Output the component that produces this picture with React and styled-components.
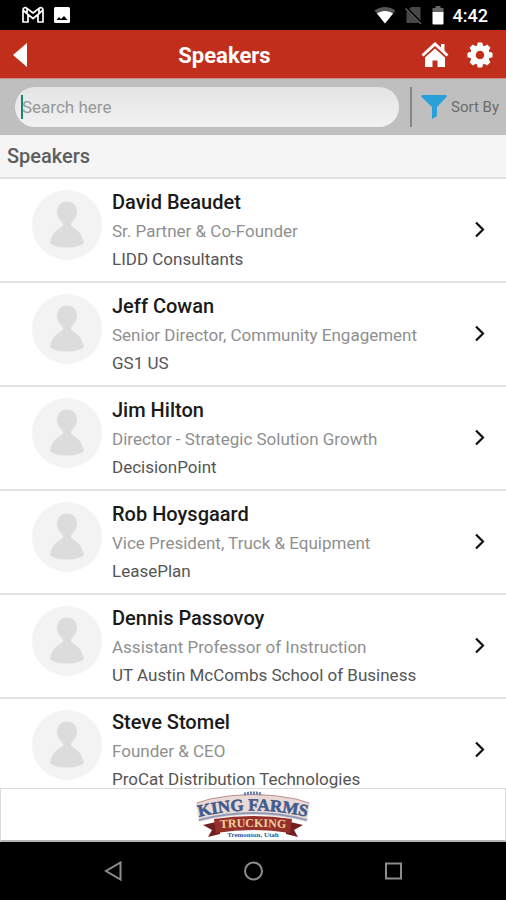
import React, { useState } from 'react';
import styled, { ThemeProvider, createGlobalStyle } from 'styled-components';

const theme = {
  primary: '#c12e1b',
  bar: '#bfbfbf',
  line: '#e1e1e1',
  accent: '#2a9fd8',
};

const speakers = [
  { name: 'David Beaudet', role: 'Sr. Partner & Co-Founder', company: 'LIDD Consultants' },
  { name: 'Jeff Cowan', role: 'Senior Director, Community Engagement', company: 'GS1 US' },
  { name: 'Jim Hilton', role: 'Director - Strategic Solution Growth', company: 'DecisionPoint' },
  { name: 'Rob Hoysgaard', role: 'Vice President, Truck & Equipment', company: 'LeasePlan' },
  { name: 'Dennis Passovoy', role: 'Assistant Professor of Instruction', company: 'UT Austin McCombs School of Business' },
  { name: 'Steve Stomel', role: 'Founder & CEO', company: 'ProCat Distribution Technologies' },
];

const StatusBar = () => (
  <StatusContainer>
    <StatusGroup>
      <svg width="22" height="18" viewBox="0 0 22 18" fill="none" stroke="#fff" aria-hidden="true">
        <path
          d="M1 16V4C1 1.5 3.5 1 5 2.300L11 7L17 2.300C18.500 1 21 1.500 21 4V16H16V8.500L11 12.500L6 8.500V16ZM1 4L6 8.500M21 4L16 8.500M5 2.300V7.500M17 2.300V7.500"
          strokeWidth="1.7"
          strokeLinejoin="round"
        />
      </svg>
      <svg width="18" height="18" viewBox="0 0 18 18" aria-hidden="true">
        <rect x="1" y="1" width="16" height="16" rx="1.500" fill="#fff" />
        <path d="M3.500 14L6 11L8 13L11 10L14.500 14Z" fill="#000" />
      </svg>
    </StatusGroup>
    <StatusGroup>
      <svg width="22" height="18" viewBox="0 0 22 18" aria-hidden="true">
        <path d="M0.500 4.500C6.500 -0.300 15.500 -0.300 21.500 4.500L11 17.500Z" fill="#555" />
        <path d="M3 7.500C7.500 4 14.500 4 19 7.500L11 17.500Z" fill="#fff" />
      </svg>
      <svg width="18" height="18" viewBox="0 0 18 18" aria-hidden="true">
        <path d="M6 1H15.500V17H1.500V6Z" fill="#484848" />
        <path d="M0 1L17 18" stroke="#000" strokeWidth="3" />
        <path d="M0.500 2.500L16 18" stroke="#666" strokeWidth="1.300" />
      </svg>
      <svg width="12" height="19" viewBox="0 0 12 19" aria-hidden="true">
        <path d="M3.500 0H8.500V2H11.500V7H0.500V2H3.500Z" fill="#666" />
        <path d="M0.500 6H11.500V17.500Q11.500 18.500 10.500 18.500H1.500Q0.500 18.500 0.500 17.500Z" fill="#fff" />
      </svg>
      <Clock>4:42</Clock>
    </StatusGroup>
  </StatusContainer>
);

const Avatar = () => (
  <AvatarSvg viewBox="0 0 70 70" aria-hidden="true">
    <circle cx="35" cy="35" r="35" fill="#f3f3f3" />
    <path
      d="M35 11.500C41 11.500 45 16 45 21.500C45 26 43 29 40 32C38.500 34 38.500 35.500 40.500 37C46.500 40 50.500 45.500 52 53C46 59 24 59 18 53C19.500 45.500 23.500 40 29.500 37C31.500 35.500 31.500 34 30 32C27 29 25 26 25 21.500C25 16 29 11.500 35 11.500Z"
      fill="#dcdcdc"
    />
  </AvatarSvg>
);

const SponsorLogo = () => (
  <svg width="118" height="48" viewBox="0 0 118 48" role="img" aria-label="King Farms Trucking">
    <defs>
      <path id="nameArc" d="M1 27Q59 12 117 27" />
      <path id="ribbonArc" d="M10 38Q59 34 108 38" />
    </defs>
    <path d="M2 12L16 8Q59 -1 102 8L116 12L113 31Q59 17 5 31Z" fill="#ead9d6" />
    <path d="M3 12L16 8Q59 -1 102 8L115 12" fill="none" stroke="#b98f90" strokeWidth="1" />
    <path d="M5 29Q59 15 113 29" fill="none" stroke="#8f9dbb" strokeWidth="2" />
    <path d="M50 3Q59 1 68 3" fill="none" stroke="#617fae" strokeWidth="3" strokeDasharray="2 1" />
    <path d="M9 34L26 30V43L14 46L18 39ZM109 34L92 30V43L104 46L100 39Z" fill="#742022" />
    <path d="M20 28Q59 22 98 28L96 42Q59 36 22 42Z" fill="#96302a" />
    <text
      fontFamily="'Liberation Serif', serif"
      fontWeight="700"
      fontSize="17"
      fill="#3b6298"
      stroke="#3b4f79"
      strokeWidth="0.500"
      textAnchor="middle"
    >
      <textPath href="#nameArc" startOffset="50%">KING FARMS</textPath>
    </text>
    <text
      fontFamily="'Liberation Serif', serif"
      fontWeight="700"
      fontSize="12"
      fill="#f2d3a0"
      textAnchor="middle"
    >
      <textPath href="#ribbonArc" startOffset="50%">TRUCKING</textPath>
    </text>
    <text
      x="59"
      y="46"
      fontFamily="'Liberation Serif', serif"
      fontWeight="700"
      fontSize="7"
      fill="#35598d"
      textAnchor="middle"
    >
      Tremonton, Utah
    </text>
  </svg>
);

const SpeakersPage = () => {
  const [search, setSearch] = useState('');

  return (
    <Container>
      <StatusBar />
      <Header>
        <IconButton aria-label="Back">
          <svg width="16" height="26" viewBox="0 0 16 26" aria-hidden="true">
            <path d="M15 1V25L1 13Z" fill="#fff" />
          </svg>
        </IconButton>
        <Title>Speakers</Title>
        <HeaderActions>
          <IconButton aria-label="Home">
            <svg width="28" height="26" viewBox="0 0 28 26" aria-hidden="true">
              <path d="M1.500 13.500L14 2L26.500 13.500" fill="none" stroke="#fff" strokeWidth="3" />
              <path d="M20 2H23.500V9L20 6Z" fill="#fff" />
              <path d="M14 6.500L24 15.500V25H16.500V18.500H11.500V25H4V15.500Z" fill="#fff" />
            </svg>
          </IconButton>
          <IconButton aria-label="Settings">
            <svg width="26" height="26" viewBox="0 0 26 26" aria-hidden="true">
              <circle cx="13" cy="13" r="7" fill="none" stroke="#fff" strokeWidth="5.500" />
              {[0, 45, 90, 135, 180, 225, 270, 315].map((angle) => (
                <path
                  key={angle}
                  d="M9.500 5L10.800 0.500H15.200L16.500 5Z"
                  fill="#fff"
                  transform={`rotate(${angle} 13 13)`}
                />
              ))}
            </svg>
          </IconButton>
        </HeaderActions>
      </Header>
      <Toolbar>
        <SearchBox>
          <Caret />
          <SearchInput
            type="text"
            aria-label="Search speakers"
            placeholder="Search here"
            value={search}
            onChange={(e) => setSearch(e.target.value)}
          />
        </SearchBox>
        <SortButton>
          <svg width="26" height="26" viewBox="0 0 26 26" aria-hidden="true">
            <path d="M0.500 1H25.500V3L16 13V22L11 25V13L0.500 3Z" fill={theme.accent} />
          </svg>
          Sort By
        </SortButton>
      </Toolbar>
      <SectionTitle>Speakers</SectionTitle>
      <SpeakersList>
        {speakers.map((speaker) => (
          <li key={speaker.name}>
            <Speaker href="#">
              <Avatar />
              <SpeakerInfo>
                <SpeakerName>{speaker.name}</SpeakerName>
                <SpeakerRole>{speaker.role}</SpeakerRole>
                <SpeakerCompany>{speaker.company}</SpeakerCompany>
              </SpeakerInfo>
              <svg width="10" height="18" viewBox="0 0 10 18" aria-hidden="true">
                <path d="M1 1.500L8 8.500L1 15.500" fill="none" stroke="#111" strokeWidth="2.200" />
              </svg>
            </Speaker>
          </li>
        ))}
      </SpeakersList>
      <Sponsor>
        <SponsorLogo />
      </Sponsor>
      <NavBar>
        <NavButton aria-label="Back">
          <svg width="20" height="20" viewBox="0 0 20 20" aria-hidden="true">
            <path d="M17.500 1.500V18.500L3 10Z" fill="none" stroke="#8c8c8c" strokeWidth="2" />
          </svg>
        </NavButton>
        <NavButton aria-label="Home">
          <svg width="20" height="20" viewBox="0 0 20 20" aria-hidden="true">
            <circle cx="10.500" cy="10" r="8.500" fill="none" stroke="#8c8c8c" strokeWidth="2" />
          </svg>
        </NavButton>
        <NavButton aria-label="Recent apps">
          <svg width="20" height="20" viewBox="0 0 20 20" aria-hidden="true">
            <rect x="3" y="2.500" width="15" height="15" fill="none" stroke="#8c8c8c" strokeWidth="2" />
          </svg>
        </NavButton>
      </NavBar>
    </Container>
  );
};

const App = () => (
  <ThemeProvider theme={theme}>
    <GlobalStyle />
    <SpeakersPage />
  </ThemeProvider>
);

export default App;

const GlobalStyle = createGlobalStyle`
  * {
    box-sizing: border-box;
  }
  body {
    margin: 0;
    font-family: Roboto, sans-serif;
  }
  svg {
    display: block;
    flex-shrink: 0;
  }
  button {
    padding: 0;
    border: 0 solid #858585;
    background: none;
    font-family: inherit;
    cursor: pointer;
  }
`;

const Container = styled.div`
  height: 100vh;
  display: flex;
  flex-direction: column;
  background: #fff;
`;

const StatusContainer = styled.div`
  height: 30px;
  flex-shrink: 0;
  padding: 0 18px 0 22px;
  display: flex;
  justify-content: space-between;
  align-items: center;
  background: #000;
`;

const StatusGroup = styled.div`
  display: flex;
  align-items: center;
  gap: 9px;
`;

const Clock = styled.span`
  color: #fff;
  font-size: 18px;
  font-weight: 500;
`;

const Header = styled.header`
  height: 49px;
  flex-shrink: 0;
  padding: 2px 13px 0 12px;
  display: grid;
  grid-template-columns: 1fr auto 1fr;
  align-items: center;
  background: ${(props) => props.theme.primary};
  border-bottom: 1px solid #cf8d85;
`;

const IconButton = styled.button`
  justify-self: start;
`;

const Title = styled.h1`
  margin: 0;
  padding-right: 56px;
  color: #fff;
  font-size: 22px;
  font-weight: 700;
`;

const HeaderActions = styled.div`
  justify-self: end;
  display: flex;
  gap: 18px;
`;

const Toolbar = styled.div`
  height: 56px;
  flex-shrink: 0;
  padding: 0 7px 0 15px;
  display: flex;
  align-items: center;
  gap: 11px;
  background: ${(props) => props.theme.bar};
`;

const SearchBox = styled.div`
  flex: 1;
  height: 40px;
  padding: 0 16px 0 6px;
  display: flex;
  align-items: center;
  border-radius: 20px;
  background: linear-gradient(#e4e4e4, #f2f2f2);
`;

const Caret = styled.span`
  width: 2px;
  height: 24px;
  margin-right: -1px;
  background: #16876f;
`;

const SearchInput = styled.input`
  flex: 1;
  min-width: 0;
  padding: 0;
  border: none;
  outline: none;
  background: none;
  color: #444;
  font-family: inherit;
  font-size: 17px;
  &::placeholder {
    color: #979797;
  }
`;

const SortButton = styled.button`
  height: 40px;
  padding-left: 9px;
  border-left-width: 2px;
  display: flex;
  align-items: center;
  gap: 4px;
  color: #6b6b6b;
  font-size: 15px;
`;

const SectionTitle = styled.h2`
  margin: 0;
  padding: 0 7px;
  flex-shrink: 0;
  color: #5d5d5d;
  background: #f5f5f5;
  border-bottom: 2px solid ${(props) => props.theme.line};
  font-size: 20px;
  font-weight: 500;
  line-height: 42px;
`;

const SpeakersList = styled.ul`
  flex: 1;
  min-height: 0;
  margin: 0;
  padding: 0;
  overflow: hidden;
  list-style: none;
`;

const Speaker = styled.a`
  padding: 8px 21px 8px 32px;
  display: flex;
  align-items: center;
  gap: 10px;
  border-bottom: 2px solid ${(props) => props.theme.line};
  text-decoration: none;
`;

const AvatarSvg = styled.svg`
  width: 70px;
  height: 70px;
  margin-bottom: 10px;
`;

const SpeakerInfo = styled.div`
  flex: 1;
  min-width: 0;
  line-height: 28px;
`;

const SpeakerName = styled.div`
  color: #1a1a1a;
  font-size: 20px;
  font-weight: 500;
  line-height: 30px;
`;

const SpeakerRole = styled.div`
  color: #8f8f8f;
  font-size: 17px;
`;

const SpeakerCompany = styled.div`
  color: #555;
  font-size: 17px;
`;

const Sponsor = styled.div`
  height: 54px;
  flex-shrink: 0;
  display: flex;
  justify-content: center;
  align-items: center;
  background: #fff;
  border: 1px solid #dadada;
  border-bottom: 2px solid #b5b5b5;
`;

const NavBar = styled.nav`
  height: 58px;
  flex-shrink: 0;
  padding: 0 43px;
  display: flex;
  background: #000;
`;

const NavButton = styled.button`
  flex: 1;
  display: flex;
  justify-content: center;
  align-items: center;
`;
